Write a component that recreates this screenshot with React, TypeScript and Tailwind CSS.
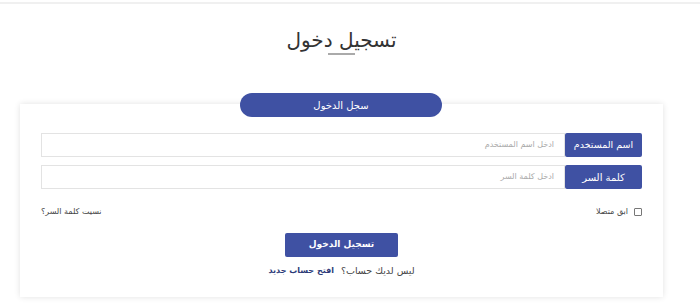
export default function App() {
  return (
    <div
      className="w-[700px] h-[304px] bg-white overflow-hidden"
      style={{ fontFamily: '"DejaVu Sans", "Noto Sans", sans-serif' }}
    >
      <div className="mt-[2px] h-[2px] bg-[#f0f0f0]" />
      <div className="w-[683px]">
        <div className="flex flex-col items-center pt-[24px]">
          <h1 className="text-[20px] leading-[25px] text-[#333] font-medium">تسجيل دخول</h1>
          <div className="h-[2px] w-[27px] bg-[#aaa]" />
        </div>

        <div
          dir="rtl"
          className="relative mx-[20px] mt-[49px] h-[193px] bg-white shadow-[0_0_6px_rgba(0,0,0,0.12)] px-[21px] pt-[29px]"
        >
          <div className="absolute -top-[11px] left-[220px] w-[202px] h-[24px] rounded-full bg-[#3f51a3] flex items-center justify-center text-white text-[10px]">
            سجل الدخول
          </div>

          <div className="flex flex-col gap-[8px]">
            <div className="flex h-[24px]">
              <div className="w-[77px] bg-[#3f51a3] rounded-[2px] flex items-center justify-center text-white text-[9.5px]">
                اسم المستخدم
              </div>
              <input
                placeholder="ادخل اسم المستخدم"
                className="flex-1 border border-[#e3e3e3] px-[10px] text-[8px] placeholder:text-[#aaa] outline-none"
              />
            </div>
            <div className="flex h-[24px]">
              <div className="w-[77px] bg-[#3f51a3] rounded-[2px] flex items-center justify-center text-white text-[10px]">
                كلمة السر
              </div>
              <input
                type="password"
                placeholder="ادخل كلمة السر"
                className="flex-1 border border-[#e3e3e3] px-[10px] text-[8px] placeholder:text-[#aaa] outline-none"
              />
            </div>
          </div>

          <div className="mt-[17px] flex items-center justify-between text-[8px] text-[#444]">
            <label className="flex items-center gap-[6px]">
              <span className="w-[8px] h-[8px] border border-[#777] rounded-[1px] bg-white" />
              <span>ابق متصلا</span>
            </label>
            <span>نسيت كلمة السر؟</span>
          </div>

          <div className="mt-[15px] flex justify-center">
            <button className="w-[113px] h-[24px] bg-[#3f51a3] rounded-[2px] text-white text-[9px] font-bold">
              تسجيل الدخول
            </button>
          </div>

          <div className="mt-[7px] flex justify-center items-center gap-[7px]">
            <span className="text-[#444] text-[9.5px]">ليس لديك حساب؟</span>
            <span className="text-[#2c3a78] font-bold text-[8px]">افتح حساب جديد</span>
          </div>
        </div>
      </div>
    </div>
  );
}
